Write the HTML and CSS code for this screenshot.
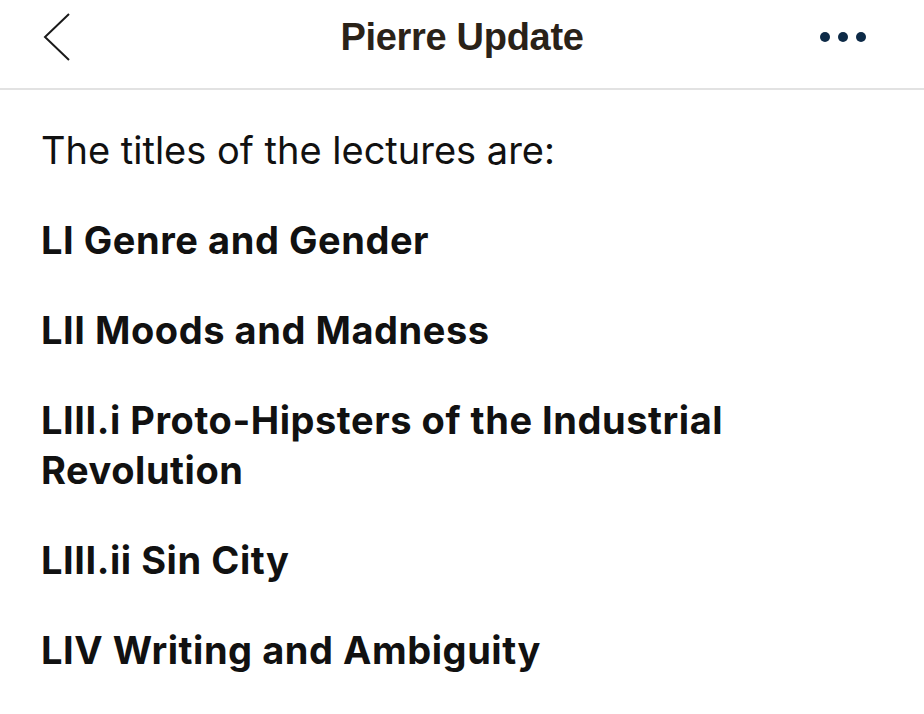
FILE: index.html
```html
<!DOCTYPE html>
<html>
<head>
<meta charset="utf-8">
<link rel="stylesheet" href="styles.css">
</head>
<body>
<header class="bar">
  <div class="back">
    <svg width="30" height="50" viewBox="0 0 30 50"><polyline points="27,2 3,25 27,48" fill="none" stroke="#1a1a1a" stroke-width="2"/></svg>
  </div>
  <h1 class="title">Pierre Update</h1>
  <div class="more"><span class="dot"></span><span class="dot"></span><span class="dot"></span></div>
</header>
<main class="content">
  <p class="intro">The titles of the lectures are:</p>
  <p class="item">LI Genre and Gender</p>
  <p class="item">LII Moods and Madness</p>
  <p class="item">LIII.i Proto-Hipsters of the Industrial Revolution</p>
  <p class="item">LIII.ii Sin City</p>
  <p class="item">LIV Writing and Ambiguity</p>
</main>
</body>
</html>
```
FILE: styles.css
```css
html, body { margin: 0; padding: 0; background: #fff; }
body { width: 924px; height: 714px; overflow: hidden; font-family: Inter, "Noto Sans", sans-serif; color: #111; }
.bar {
  height: 88px;
  border-bottom: 2px solid #e2e2e2;
  display: flex;
  align-items: center;
  justify-content: space-between;
  padding: 0 58px 0 42px;
  position: relative;
}
.back { display: flex; align-items: center; width: 30px; height: 50px; margin-top: -14px; }
.title {
  position: absolute;
  left: 0; right: 0;
  text-align: center;
  margin: 0;
  top: 16px;
  font-family: "Liberation Sans", Arial, sans-serif;
  font-weight: bold;
  font-size: 38px;
  color: #2a2218;
  letter-spacing: -0.3px;
}
.more { display: flex; gap: 8px; margin-top: -14px; }
.dot { width: 10px; height: 10px; border-radius: 50%; background: #0d2a47; }
.content { padding: 0 41px; }
.content p { margin: 0; line-height: 50px; }
.intro { font-size: 38px; font-weight: 400; margin-top: 35px !important; }
.item { font-size: 38px; font-weight: 700; letter-spacing: 0.55px; margin-top: 40px !important; }
```
